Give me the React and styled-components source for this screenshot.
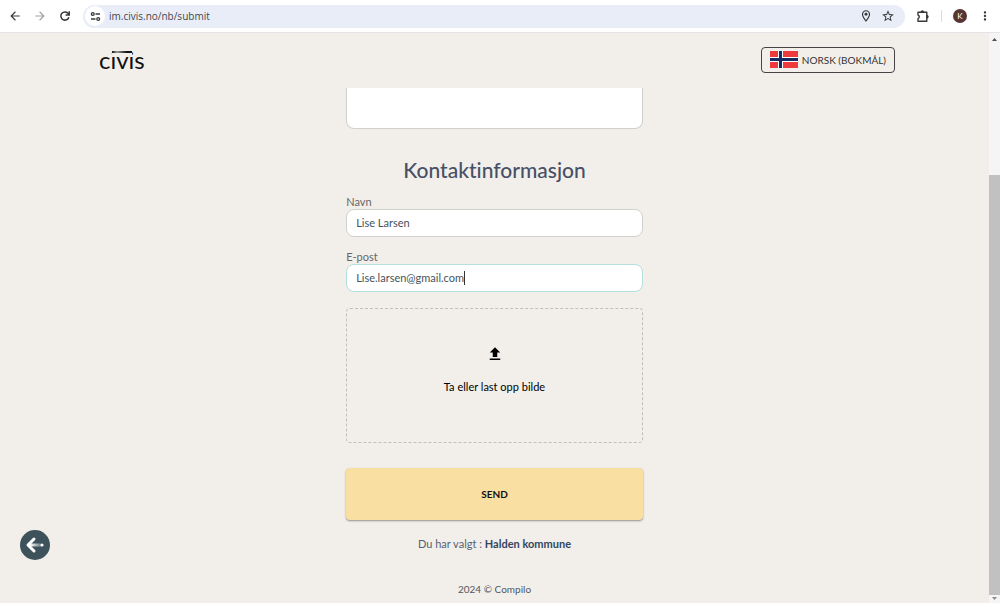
import { useLayoutEffect, useRef, useState } from "react";
import styled, { createGlobalStyle } from "styled-components";
import {
  MdArrowBack,
  MdArrowForward,
  MdOutlineLocationOn,
  MdStarBorder,
  MdMoreVert,
  MdUpload,
} from "react-icons/md";

const GlobalStyle = createGlobalStyle`
  *, *::before, *::after {
    box-sizing: border-box;
  }
  body {
    margin: 0;
    background: #f2efea;
    color: #4a5568;
    font-family: Lato, "Liberation Sans", sans-serif;
    font-size: 11px;
    font-variant-ligatures: none;
  }
  button, input, textarea {
    font-family: inherit;
  }
`;

const Window = styled.div`
  display: flex;
  flex-direction: column;
  min-height: 100vh;
`;

const Toolbar = styled.div`
  display: flex;
  align-items: center;
  gap: 11px;
  height: 33px;
  padding: 0 8px;
  background: #fff;
  border-bottom: 1px solid #e4e4e6;
`;

const ToolButton = styled.button`
  display: flex;
  align-items: center;
  justify-content: center;
  width: 14px;
  height: 22px;
  padding: 0;
  border: none;
  background: transparent;
  color: ${(props) => (props.$muted ? "#a3a3a6" : "#37383b")};
  font-size: 14px;
`;

const NavButtons = styled.div`
  display: flex;
  gap: 11px;
`;

const AddressBar = styled.div`
  display: flex;
  flex: 1;
  align-items: center;
  gap: 8px;
  height: 23px;
  padding: 0 10px 0 2px;
  border-radius: 12px;
  background: #e9edf8;
`;

const SiteInfo = styled.button`
  display: flex;
  align-items: center;
  justify-content: center;
  width: 20px;
  height: 20px;
  margin-right: -4px;
  padding: 0;
  border: none;
  border-radius: 50%;
  background: #fff;
`;

const Url = styled.input`
  flex: 1;
  min-width: 0;
  padding: 0;
  border: none;
  outline: none;
  background: transparent;
  color: #45474c;
  font-family: "Open Sans", "Noto Sans", sans-serif;
  font-size: 10px;
`;

const Divider = styled.span`
  width: 1px;
  height: 12px;
  background: #d3dcf5;
`;

const Avatar = styled.button`
  width: 14px;
  height: 14px;
  padding: 0;
  border: none;
  border-radius: 50%;
  background: #583432;
  color: #fff;
  font-size: 8px;
  line-height: 14px;
`;

const Viewport = styled.div`
  display: flex;
  flex: 1;
`;

const Page = styled.div`
  display: flex;
  flex: 1;
  flex-direction: column;
`;

const Header = styled.header`
  display: flex;
  align-items: center;
  justify-content: space-between;
  height: 55px;
  padding: 0 94px 2px 99px;
`;

const Logo = styled.a`
  position: relative;
  color: #101010;
  font-size: 24px;
  line-height: 28px;
  text-decoration: none;
  /* the bar stands in for both dots */
  &::after {
    content: "";
    position: absolute;
    top: 5px;
    left: 13px;
    width: 20px;
    height: 5px;
    border-bottom: 3px solid #f2efea;
    background: linear-gradient(90deg, #111, #999 25%, #111 75%);
  }
`;

const LanguageButton = styled.button`
  display: flex;
  align-items: center;
  gap: 4px;
  height: 26px;
  padding: 0 8px;
  border: 1px solid #444;
  border-radius: 4px;
  background: transparent;
  color: #333;
  font-size: 10px;
`;

const Form = styled.form`
  display: flex;
  flex-direction: column;
  width: 30%;
  min-width: 240px;
  margin: 0 auto;
`;

const Message = styled.textarea`
  height: 41px;
  padding: 8px;
  border: 1px solid #d0d0cf;
  border-top: none;
  border-radius: 0 0 8px 8px;
  outline: none;
  background: #fff;
  resize: none;
`;

const Title = styled.h1`
  margin: 25px 0 8px;
  color: #475067;
  font-size: 21px;
  font-weight: 500;
  line-height: 32px;
  text-align: center;
`;

const Field = styled.div`
  display: flex;
  flex-direction: column;
  margin-bottom: 12px;
`;

const Label = styled.label`
  color: #666;
  line-height: 15px;
`;

const InputWrap = styled.div`
  position: relative;
  display: flex;
`;

const Input = styled.input`
  flex: 1;
  min-width: 0;
  height: 28px;
  padding: 0 9px 2px;
  border: 1px solid ${(props) => (props.$active ? "#b3dfdc" : "#d0d0cf")};
  border-radius: 8px;
  outline: none;
  background: #fff;
  color: #44525c;
  font-size: 11px;
`;

const Caret = styled.span`
  position: absolute;
  top: 7px;
  width: 1px;
  height: 14px;
  background: #333;
`;

const DropZone = styled.button`
  display: flex;
  flex-direction: column;
  align-items: center;
  gap: 16px;
  height: 135px;
  margin: 4px 0 25px;
  padding: 36px 0 0;
  border: 1px dashed #bfc0bd;
  border-radius: 4px;
  background: transparent;
  color: #000;
  font-size: 11px;
  line-height: 16px;
`;

const SendButton = styled.button`
  height: 52px;
  border: none;
  border-radius: 4px;
  background: #f9dfa1;
  box-shadow: 0 1px 2px rgba(0, 0, 0, 0.4);
  color: #111;
  font-size: 10px;
  font-weight: 700;
`;

const Selected = styled.p`
  margin: 15px 0 0;
  color: #566173;
  line-height: 18px;
  text-align: center;
  & > strong {
    color: #34455e;
  }
`;

const Footer = styled.footer`
  margin-top: auto;
  padding-bottom: 6px;
  color: #505862;
  font-size: 10px;
  line-height: 16px;
  text-align: center;
`;

const Scrollbar = styled.div`
  display: flex;
  flex-direction: column;
  align-items: center;
  gap: 2px;
  width: 11px;
  padding: 4px 0 2px;
  background: #f5f5f5;
`;

const Track = styled.div`
  display: flex;
  flex: 1;
  align-items: flex-end;
  width: 100%;
`;

const Thumb = styled.div`
  width: 100%;
  height: 76%;
  background: #c1c1c1;
`;

const BackButton = styled.button`
  position: fixed;
  left: 20px;
  bottom: 43px;
  display: flex;
  align-items: center;
  justify-content: center;
  width: 30px;
  height: 30px;
  padding: 0;
  border: none;
  border-radius: 50%;
  background: #3d525a;
`;

function NorwayFlag() {
  return (
    <svg width="28" height="17" viewBox="0 0 28 17" aria-hidden="true">
      <path d="M0 0h28v17H0z" fill="#ed3a3c" />
      <path d="M8 0h5v17H8zM0 6h28v5H0z" fill="#fff" />
      <path d="M9 0h3v17H9zM0 7h28v3H0z" fill="#142a60" />
    </svg>
  );
}

function TuneIcon() {
  return (
    <svg width="11" height="11" viewBox="0 0 11 11" fill="none" stroke="#37383b" strokeWidth="1.3">
      <circle cx="2.8" cy="3" r="1.4" />
      <path d="M5.5 3H10M1 8h4.5" />
      <circle cx="8.2" cy="8" r="1.4" />
    </svg>
  );
}

function ReloadIcon() {
  return (
    <svg width="12" height="12" viewBox="0 0 12 12" fill="none" stroke="currentColor" strokeWidth="1.5">
      <path d="M9.9 7.2A4.1 4.1 0 1 1 9.3 3.6L10 4.6" />
      <path d="M10.2 1.2v3.7H6.6" />
    </svg>
  );
}

function ExtensionIcon() {
  return (
    <svg width="14" height="14" viewBox="0 0 14 14" fill="none" stroke="currentColor" strokeWidth="1.4" strokeLinejoin="round">
      <path d="M2 3.2h8.8v9.1H2V9.6a1.9 1.9 0 0 0 0-3.6z" />
      <path d="M4.8 3.2a1.6 1.6 0 0 1 3.2 0zM10.8 6.1a1.6 1.6 0 0 1 0 3.2z" fill="currentColor" strokeWidth="0.6" />
    </svg>
  );
}

function BackArrow() {
  return (
    <svg width="20" height="18" viewBox="0 0 20 18" fill="none">
      <defs>
        <linearGradient id="shaft" gradientUnits="userSpaceOnUse" x1="5" y1="0" x2="16" y2="0">
          <stop offset="0" stopColor="#fff" />
          <stop offset="1" stopColor="#fff" stopOpacity="0.25" />
        </linearGradient>
      </defs>
      <path d="M3 7.5h13v3H3z" fill="url(#shaft)" />
      <path d="M9 3L3 9l6 6" stroke="#fff" strokeWidth="3" strokeLinecap="round" strokeLinejoin="round" />
      <circle cx="17" cy="9" r="1.6" fill="#fff" />
    </svg>
  );
}

function ScrollArrow({ down }) {
  return (
    <svg width="5" height="4" viewBox="0 0 5 4" aria-hidden="true">
      <path d={down ? "M0 0h5L2.5 3z" : "M0 4h5L2.5 1z"} fill={down ? "#8b8b8b" : "#505050"} />
    </svg>
  );
}

function TextField({ id, label, type, value, onChange, active }) {
  const inputRef = useRef(null);
  const [caretLeft, setCaretLeft] = useState(0);

  useLayoutEffect(() => {
    const style = getComputedStyle(inputRef.current);
    const context = document.createElement("canvas").getContext("2d");
    context.font = `${style.fontSize} ${style.fontFamily}`;
    setCaretLeft(Math.round(context.measureText(value).width) + 10);
  }, [value]);

  return (
    <Field>
      <Label htmlFor={id}>{label}</Label>
      <InputWrap>
        <Input
          ref={inputRef}
          id={id}
          type={type}
          value={value}
          $active={active}
          onChange={(e) => onChange(e.target.value)}
        />
        {active && <Caret style={{ left: caretLeft }} />}
      </InputWrap>
    </Field>
  );
}

export default function App() {
  const [name, setName] = useState("Lise Larsen");
  const [email, setEmail] = useState("Lise.larsen@gmail.com");

  return (
    <Window>
      <GlobalStyle />
      <Toolbar>
        <NavButtons>
          <ToolButton aria-label="Tilbake">
            <MdArrowBack />
          </ToolButton>
          <ToolButton aria-label="Frem" $muted>
            <MdArrowForward />
          </ToolButton>
          <ToolButton aria-label="Last inn på nytt">
            <ReloadIcon />
          </ToolButton>
        </NavButtons>
        <AddressBar>
          <SiteInfo aria-label="Nettstedinformasjon">
            <TuneIcon />
          </SiteInfo>
          <Url aria-label="Adresse" defaultValue="im.civis.no/nb/submit" />
          <ToolButton aria-label="Posisjon">
            <MdOutlineLocationOn />
          </ToolButton>
          <ToolButton aria-label="Bokmerke">
            <MdStarBorder />
          </ToolButton>
        </AddressBar>
        <ToolButton aria-label="Utvidelser">
          <ExtensionIcon />
        </ToolButton>
        <Divider />
        <Avatar>K</Avatar>
        <ToolButton aria-label="Meny">
          <MdMoreVert />
        </ToolButton>
      </Toolbar>
      <Viewport>
        <Page>
          <Header>
            <Logo href="#">civis</Logo>
            <LanguageButton>
              <NorwayFlag />
              NORSK (BOKMÅL)
            </LanguageButton>
          </Header>
          <Form onSubmit={(e) => e.preventDefault()}>
            <Message aria-label="Melding" />
            <Title>Kontaktinformasjon</Title>
            <TextField id="name" label="Navn" type="text" value={name} onChange={setName} />
            <TextField id="email" label="E-post" type="email" value={email} onChange={setEmail} active />
            <DropZone type="button">
              <MdUpload size={18} />
              Ta eller last opp bilde
            </DropZone>
            <SendButton type="submit">SEND</SendButton>
            <Selected>
              Du har valgt : <strong>Halden kommune</strong>
            </Selected>
          </Form>
          <Footer>2024 © Compilo</Footer>
        </Page>
        <Scrollbar>
          <ScrollArrow />
          <Track>
            <Thumb />
          </Track>
          <ScrollArrow down />
        </Scrollbar>
      </Viewport>
      <BackButton aria-label="Forrige steg">
        <BackArrow />
      </BackButton>
    </Window>
  );
}
